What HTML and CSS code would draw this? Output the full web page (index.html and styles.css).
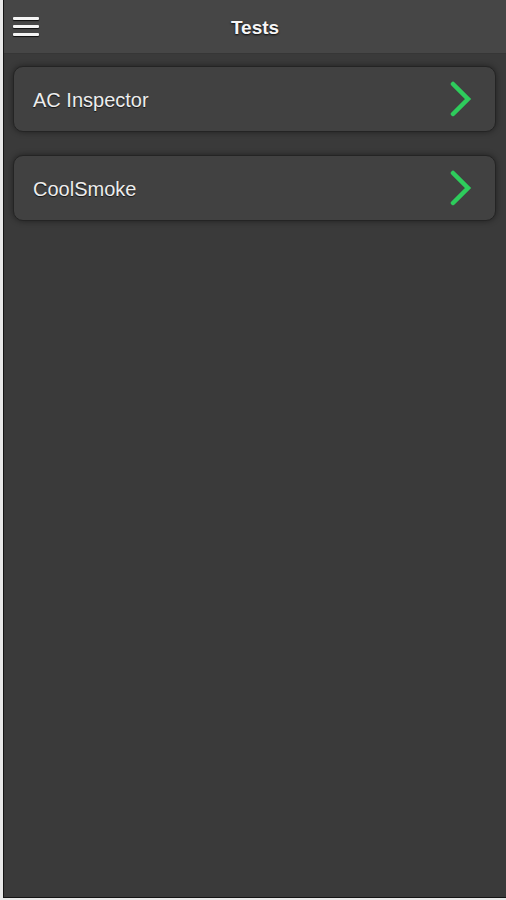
FILE: index.html
```html
<!doctype html>
<html>
<head>
<meta charset="utf-8" />
<meta name="viewport" content="width=device-width" />
<title>Tests</title>
<link rel="stylesheet" href="styles.css">
</head>
<body>

<div class="app">
  <div class="header">
    <button class="menu-button" aria-label="Menu">
      <span></span><span></span><span></span>
    </button>
    <h1 class="title">Tests</h1>
  </div>

  <div class="list">
    <a class="list-item" href="#">
      <span class="list-item-label">AC Inspector</span>
      <svg class="chevron" width="22" height="36" viewBox="0 0 22 36">
        <polyline points="3,3 18,18 3,33" />
      </svg>
    </a>
    <a class="list-item" href="#">
      <span class="list-item-label">CoolSmoke</span>
      <svg class="chevron" width="22" height="36" viewBox="0 0 22 36">
        <polyline points="3,3 18,18 3,33" />
      </svg>
    </a>
  </div>
</div>

</body>
</html>
```

FILE: styles.css
```css
* { box-sizing: border-box; }

html, body {
  margin: 0;
  background: #e8e8e8;
}

body {
  font-family: "Liberation Sans", Arial, sans-serif;
  height: 900px;
  overflow: hidden;
}

.app {
  margin-left: 3px;
  height: 898px;
  background: #3a3a3a;
  border-left: 1px solid #141414;
  border-bottom: 1px solid #141414;
}

/* top bar */
.header {
  position: relative;
  height: 54px;
  background: #464646;
  border-bottom: 1px solid #363636;
  display: flex;
  align-items: center;
  justify-content: center;
}

.menu-button {
  position: absolute;
  left: 9px;
  top: 17px;
  width: 26px;
  height: 19px;
  padding: 0;
  border: 0;
  background: none;
  display: flex;
  flex-direction: column;
  justify-content: space-between;
}

.menu-button span {
  display: block;
  height: 3px;
  width: 100%;
  background: #f4f4f4;
  border-radius: 1px;
  box-shadow: 0 1px 1px rgba(0, 0, 0, .8);
}

.title {
  margin: 0;
  padding-top: 3px;
  font-size: 19px;
  font-weight: bold;
  color: #f6f6f6;
  text-shadow: 0 1px 2px rgba(0, 0, 0, .9);
}

/* list */
.list {
  padding: 12px 10px 0 9px;
  display: flex;
  flex-direction: column;
  gap: 23px;
}

.list-item {
  height: 66px;
  display: flex;
  align-items: center;
  justify-content: space-between;
  padding: 0 23px 0 19px;
  background: #414141;
  border: 1px solid #242424;
  border-radius: 10px;
  box-shadow: 0 0 6px rgba(0, 0, 0, .45);
  text-decoration: none;
}

.list-item-label {
  padding-top: 2px;
  font-size: 20px;
  color: #ededed;
  text-shadow: 0 1px 1px rgba(0, 0, 0, .7);
}

.chevron polyline {
  fill: none;
  stroke: #2ecc5c;
  stroke-width: 4.5;
  stroke-linecap: round;
  stroke-linejoin: miter;
}
```
